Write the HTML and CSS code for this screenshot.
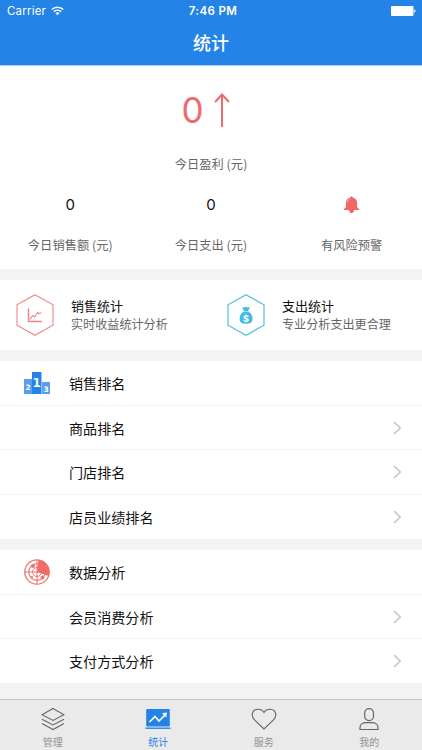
FILE: index.html
```html
<!DOCTYPE html>
<html lang="zh-CN">
<head>
  <meta charset="UTF-8" />
  <meta name="viewport" content="width=device-width, initial-scale=1.0" />
  <title>统计</title>
  <link rel="stylesheet" href="styles.css">
</head>
<body>
  <header class="header">
    <div class="status-bar">
      <div class="carrier">
        <span>Carrier</span>
        <svg width="13" height="10" viewBox="0 0 13 10" fill="none" stroke="#fff" stroke-width="1.6">
          <path d="M.8 3.5a8.2 8.2 0 0 1 11.4 0M2.9 5.7a5.2 5.2 0 0 1 7.2 0" />
          <path d="M6.5 9.3 4.4 7.1a3.1 3.1 0 0 1 4.2 0z" fill="#fff" stroke="none" />
        </svg>
      </div>
      <div class="clock">7:46 PM</div>
      <div class="battery">
        <svg width="25" height="10" viewBox="0 0 25 10" fill="#fff">
          <rect width="22.5" height="10" rx="1" />
          <path d="M23.2 3.3c1.8.5 1.8 2.9 0 3.4z" />
        </svg>
      </div>
    </div>
    <h1>统计</h1>
  </header>

  <main class="content">
    <section class="summary">
      <div class="profit">
        <span>0</span>
        <svg width="16" height="34" viewBox="0 0 16 34" fill="none" stroke="#ec6a6b" stroke-width="2">
          <path d="M8 34V2M1 9l7-7.5L15 9" />
        </svg>
      </div>
      <div class="label">今日盈利 (元)</div>
      <div class="figures">
        <div class="figure">
          <div class="value">0</div>
          <div class="label">今日销售额 (元)</div>
        </div>
        <div class="figure">
          <div class="value">0</div>
          <div class="label">今日支出 (元)</div>
        </div>
        <div class="figure">
          <div class="value">
            <svg width="17" height="18" viewBox="0 0 17 18">
              <path d="M8.5.5c.8 0 1.2.5 1.3 1.1 2.7.7 4.300 2.700 4.300 5.400v3.600c0 1 .7 1.700 2.100 2.500v.9h-5.100c-.3 2-1.100 3-2.600 3s-2.300-1-2.600-3H.8v-.9c1.400-.8 2.100-1.500 2.100-2.500V7c0-2.700 1.600-4.700 4.300-5.400.1-.6.500-1.100 1.300-1.100z" fill="#f26667" />
              <path d="M4.400 6.300c.2-1.500 1-2.500 2.300-3.100" fill="none" stroke="#fff" stroke-width=".6" />
            </svg>
          </div>
          <div class="label">有风险预警</div>
        </div>
      </div>
    </section>

    <section class="cards">
      <div class="card">
        <svg width="38" height="42" viewBox="0 0 38 42" fill="none" stroke="#ec8787">
          <path d="M19 .7 37 10.800v20.400L19 41.300 1 31.200V10.800z" stroke-width="1.100" />
          <path d="M12.500 14.500v13h13.500" stroke-width="1.500" />
          <path d="m14 25.500 2.500-4 2 1.500 3-4.500 1.500 1 2.500-.8" stroke-width="1.200" />
        </svg>
        <div>
          <div class="card-title">销售统计</div>
          <div class="card-text">实时收益统计分析</div>
        </div>
      </div>
      <div class="card">
        <svg width="38" height="42" viewBox="0 0 38 42">
          <path d="M19 .7 37 10.800v20.400L19 41.300 1 31.200V10.800z" fill="none" stroke="#54bddd" stroke-width="1.200" />
          <path d="M15.200 13.500c1-.7 1.700 0 2.300 0 .7-1 2.300-1 3 0 .8 0 1.300-.5 2.300.2l-1.800 3.300h-4zM16.700 17.500h4.800c2.700 1.600 4.200 4.600 4 7.400-.2 3.300-2 4.900-6.400 4.900s-6.300-1.600-6.500-4.900c-.2-2.800 1.400-5.800 4.100-7.400z" fill="#43bce5" />
          <text x="19" y="27.500" text-anchor="middle" class="coin">$</text>
        </svg>
        <div>
          <div class="card-title">支出统计</div>
          <div class="card-text">专业分析支出更合理</div>
        </div>
      </div>
    </section>

    <section class="list">
      <div class="row">
        <svg class="row-icon" width="26" height="24" viewBox="0 0 26 24">
          <path d="M0 8h8v15H0zM18 11h8v12h-8z" fill="#5aa0e8" />
          <path d="M8 1h9.500v22H8z" fill="#2483e6" />
          <text x="4" y="18.500" text-anchor="middle" class="rank-small">2</text>
          <text x="12.700" y="16" text-anchor="middle" class="rank-big">1</text>
          <text x="22" y="20.500" text-anchor="middle" class="rank-small">3</text>
        </svg>
        <span>销售排名</span>
      </div>
      <div class="row">
        <span>商品排名</span>
        <svg class="arrow" width="9" height="14" viewBox="0 0 9 14"><path d="m1 1 6.200 6L1 13" /></svg>
      </div>
      <div class="row">
        <span>门店排名</span>
        <svg class="arrow" width="9" height="14" viewBox="0 0 9 14"><path d="m1 1 6.200 6L1 13" /></svg>
      </div>
      <div class="row">
        <span>店员业绩排名</span>
        <svg class="arrow" width="9" height="14" viewBox="0 0 9 14"><path d="m1 1 6.200 6L1 13" /></svg>
      </div>
    </section>

    <section class="list">
      <div class="row">
        <svg class="row-icon" width="26" height="26" viewBox="0 0 26 26" fill="none" stroke="#ea7771">
          <circle cx="13" cy="13" r="12.200" stroke-width="1.300" />
          <circle cx="13" cy="13" r="8.300" stroke-width="1.200" />
          <circle cx="13" cy="13" r="4.500" />
          <path d="M13 1v24M1 13h24" />
          <path d="M13 13 14.500.8A12.200 12.200 0 0 1 24.500 17z" fill="#f26b65" stroke="none" />
          <g fill="#ea7771" stroke="none">
            <circle cx="9" cy="7" r="2" />
            <circle cx="18.500" cy="18.500" r="2" />
            <circle cx="8" cy="18" r="1.100" />
          </g>
        </svg>
        <span>数据分析</span>
      </div>
      <div class="row">
        <span>会员消费分析</span>
        <svg class="arrow" width="9" height="14" viewBox="0 0 9 14"><path d="m1 1 6.200 6L1 13" /></svg>
      </div>
      <div class="row">
        <span>支付方式分析</span>
        <svg class="arrow" width="9" height="14" viewBox="0 0 9 14"><path d="m1 1 6.200 6L1 13" /></svg>
      </div>
    </section>
  </main>

  <nav class="tab-bar">
    <div class="tab">
      <svg width="24" height="24" viewBox="0 0 24 24" fill="none" stroke="#666" stroke-width="1.100">
        <path d="M12 1.500 23 7.700 12 13.500 1 7.700zM1 12.200l11 5.800 11-5.800M1 16.500l11 6 11-6" />
      </svg>
      <span>管理</span>
    </div>
    <div class="tab active">
      <svg width="26" height="24" viewBox="0 0 26 24">
        <rect x="1.200" y="2" width="23.600" height="17.500" rx="1.200" fill="#2483e6" />
        <path d="M.5 20.500h25v1.400H.5z" fill="#2483e6" />
        <path d="m4.500 15 5.500-5.500 4 4.500 6.500-6.500" fill="none" stroke="#fff" stroke-width="1.700" />
        <path d="m17 6.200 5-.7-.7 5z" fill="#fff" />
      </svg>
      <span>统计</span>
    </div>
    <div class="tab">
      <svg width="26" height="24" viewBox="0 0 26 24" fill="none" stroke="#666" stroke-width="1.100">
        <path d="M13 22 3.500 12.800C1.800 11.100 1.200 9.500 1.200 7.700 1.200 4.500 3.700 2.200 6.800 2.200c2.800 0 5 1.100 6.200 3.200 1.200-2.100 3.400-3.200 6.200-3.200 3.100 0 5.600 2.300 5.600 5.500 0 1.800-.6 3.400-2.300 5.100z" />
      </svg>
      <span>服务</span>
    </div>
    <div class="tab">
      <svg width="20" height="24" viewBox="0 0 20 24" fill="none" stroke="#666" stroke-width="1.200">
        <rect x="5.700" y="1.700" width="8.800" height="12" rx="4.400" />
        <path d="M1 22.500v-1.800c0-3.200 2.800-5 6-5h6c3.200 0 6 1.800 6 5v1.800z" />
      </svg>
      <span>我的</span>
    </div>
  </nav>
</body>
</html>
```

FILE: styles.css
```css
* {
  box-sizing: border-box;
}

body {
  display: flex;
  flex-direction: column;
  height: 750px;
  margin: 0;
  overflow: hidden;
  background: #f3f3f3;
  color: #111;
  font-family: "Noto Sans CJK SC", sans-serif;
}

svg {
  display: block;
  flex-shrink: 0;
}

.header {
  height: 66px;
  background: #2483e6;
  border-bottom: 1px solid #a5cdf5;
  color: #fff;
}

.status-bar {
  display: grid;
  grid-template-columns: 1fr auto 1fr;
  align-items: center;
  height: 22px;
  padding: 0 6px 0 7px;
  font-family: Inter, sans-serif;
  font-size: 11.5px;
}

.carrier {
  display: flex;
  align-items: center;
  gap: 5px;
  letter-spacing: 0.2px;
}

.clock {
  padding-left: 3px;
  font-weight: 600;
  letter-spacing: 0.4px;
}

.battery {
  justify-self: end;
}

.header h1 {
  margin: 0;
  font-size: 18px;
  font-weight: 500;
  line-height: 41px;
  text-align: center;
}

.summary {
  height: 203px;
  padding-top: 22px;
  background: #fff;
  text-align: center;
}

.profit {
  display: flex;
  align-items: center;
  justify-content: center;
  gap: 10px;
  height: 44px;
  padding-right: 11px;
  color: #ec6a6b;
  font-family: Inter, sans-serif;
  font-size: 35px;
}

.label {
  color: #666;
  font-size: 12.2px;
  letter-spacing: 0.1px;
  line-height: 18px;
}

.profit + .label {
  margin-top: 23px;
}

.figures {
  display: grid;
  grid-template-columns: repeat(3, 1fr);
  margin-top: 22px;
}

.value {
  display: flex;
  align-items: center;
  justify-content: center;
  height: 19px;
  margin-bottom: 22px;
  font-family: Inter, sans-serif;
  font-size: 15px;
}

.cards {
  display: flex;
  height: 70px;
  margin-top: 11px;
  background: #fff;
}

.card {
  display: flex;
  align-items: center;
  flex: 1;
  gap: 17px;
  padding-left: 16px;
}

.card-title {
  font-size: 13px;
  line-height: 18px;
}

.card-text {
  color: #666;
  font-size: 12.1px;
  line-height: 18px;
}

.coin {
  fill: #fff;
  font: bold 9px Inter, sans-serif;
}

.list {
  margin-top: 11px;
  background: #fff;
}

.row {
  display: flex;
  align-items: center;
  height: 44.7px;
  padding: 0 20px 0 69px;
  border-bottom: 1px solid #f4f4f4;
  font-size: 14.1px;
}

.row:last-child {
  height: 44px;
  border-bottom: none;
}

.row-icon {
  margin: 0 19px 0 -45px;
}

.arrow {
  margin-left: auto;
  fill: none;
  stroke: #c7c7cc;
  stroke-width: 1.7;
}

.rank-big,
.rank-small {
  fill: #fff;
  font-family: "DejaVu Sans", sans-serif;
  font-weight: bold;
}

.rank-big {
  font-size: 12px;
}

.rank-small {
  font-size: 7.5px;
}

.tab-bar {
  display: grid;
  grid-template-columns: repeat(4, 1fr);
  height: 51px;
  margin-top: auto;
  border-top: 1px solid #c9c9c9;
  background: #eaeaea;
}

.tab {
  display: flex;
  flex-direction: column;
  align-items: center;
  padding-top: 7px;
  color: #929292;
  font-size: 10px;
  line-height: 14px;
}

.tab span {
  margin-top: 4px;
}

.tab.active {
  color: #2483e6;
}
```
